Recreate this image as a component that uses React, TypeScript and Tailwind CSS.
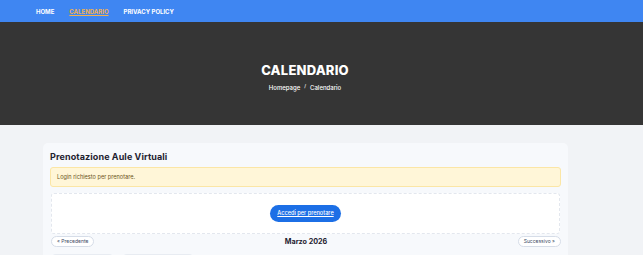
import React from "react";

export default function App() {
  return (
    <div className="w-[643px] h-[255px] overflow-hidden bg-[#f1f3f6]" style={{ fontFamily: "Inter, 'Liberation Sans', sans-serif" }}>
      <nav className="h-[22px] bg-[#3f86f2] flex items-center pl-[36px] gap-[15px] text-[6px] font-bold text-white uppercase">
        <span>Home</span>
        <span className="text-[#f2b04e] underline">Calendario</span>
        <span>Privacy Policy</span>
      </nav>
      <header className="h-[103px] bg-[#353535] flex flex-col items-center justify-center text-white pr-[33px]">
        <h1 className="text-[13px] font-extrabold leading-none tracking-[0.2px] mt-[8px]">CALENDARIO</h1>
        <div className="flex items-center gap-[4px] text-[6px] mt-[6px] font-medium">
          <span>Homepage</span>
          <span className="text-[5px]">/</span>
          <span>Calendario</span>
        </div>
      </header>
      <main className="pt-[18px] pl-[43px]">
        <section className="w-[525px] bg-[#f7f9fc] rounded-[5px] px-[7px] pt-[8px] pb-[10px]">
          <h2 className="text-[9px] font-bold text-[#1e2230] leading-none mt-[1px] tracking-[0.1px]">Prenotazione Aule Virtuali</h2>
          <div className="mt-[6px] h-[20px] bg-[#fff6d8] border border-[#fbe6a6] rounded-[3px] flex items-center pl-[6px] text-[5.6px] text-[#6b5420]">
            Login richiesto per prenotare.
          </div>
          <div className="mt-[6px] ml-[1px] mr-[1px] h-[41px] bg-white border border-dashed border-[#e3e7ee] rounded-[3px] flex items-center justify-center">
            <button className="h-[17px] px-[7px] rounded-full bg-[#1c6fe6] text-white text-[5.6px] underline font-medium">Accedi per prenotare</button>
          </div>
          <div className="mt-[2px] flex items-center justify-between">
            <span className="h-[11px] px-[5px] flex items-center rounded-full border border-[#d6dde8] bg-white text-[5px] text-[#3d4a63] ml-[1px]">« Precedente</span>
            <span className="text-[7.2px] font-bold text-[#1e2230] mt-[1px]">Marzo 2026</span>
            <span className="h-[11px] px-[5px] flex items-center rounded-full border border-[#d6dde8] bg-white text-[5px] text-[#3d4a63]">Successivo »</span>
          </div>
          <div className="mt-[6px] flex gap-[10px] ml-[2px]">
            <div className="w-[61px] h-[10px] rounded-[4px] bg-[#e8ecf2]" />
            <div className="w-[70px] h-[10px] rounded-[4px] bg-[#e8ecf2]" />
          </div>
        </section>
      </main>
    </div>
  );
}
